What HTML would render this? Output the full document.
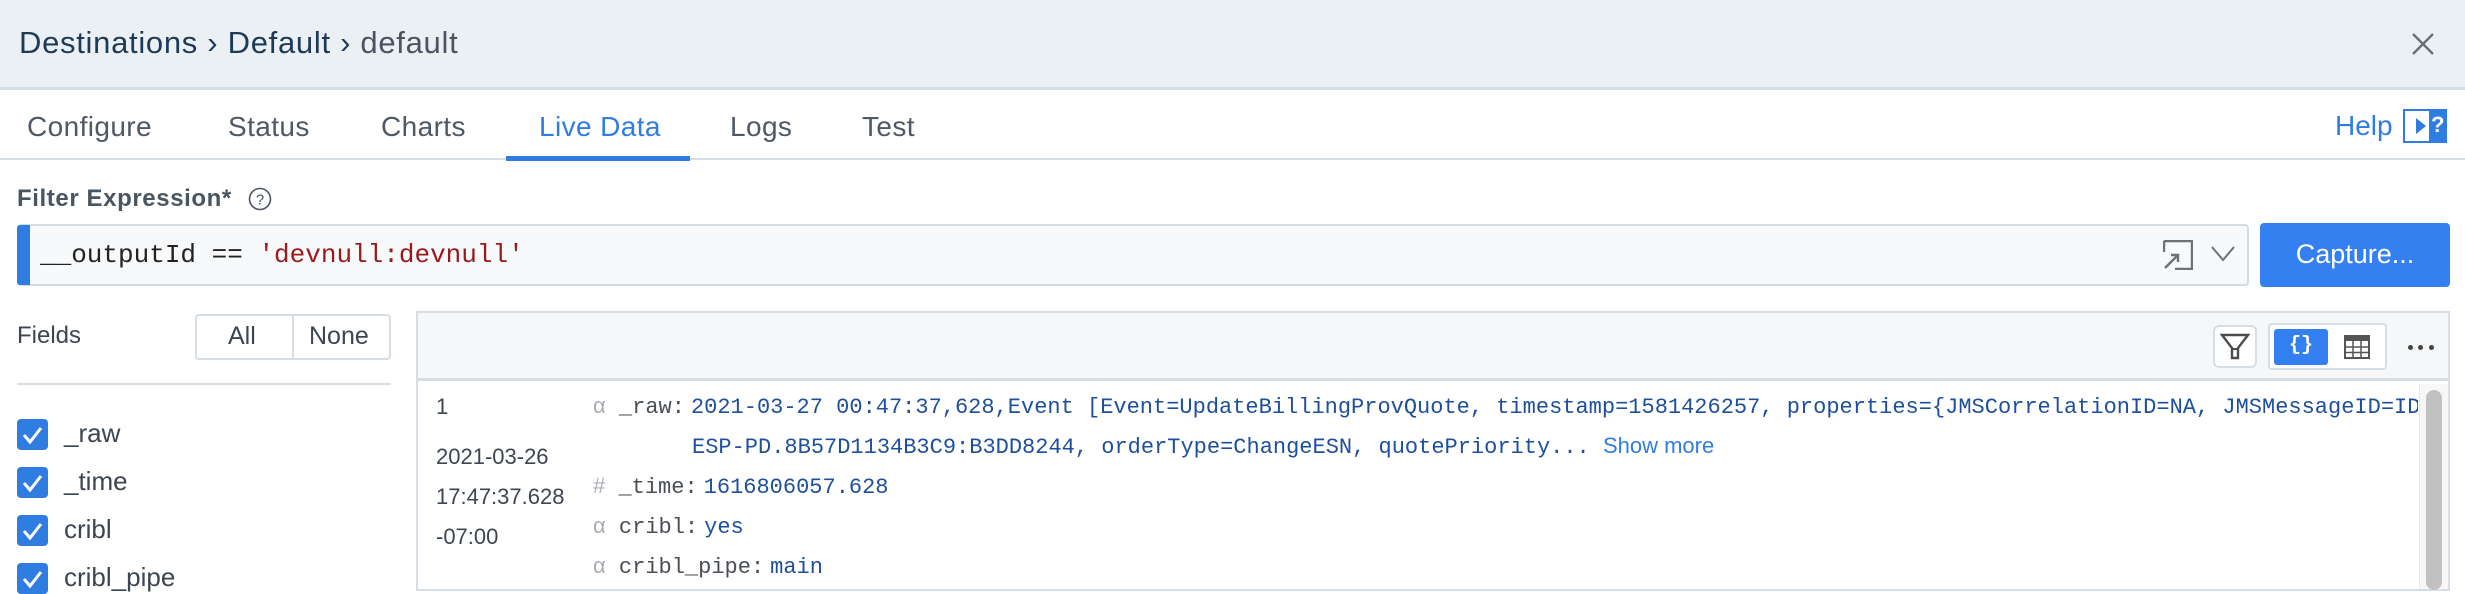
<!DOCTYPE html>
<html><head><meta charset="utf-8"><style>
*{box-sizing:border-box;margin:0;padding:0}
body{width:2465px;height:593px;overflow:hidden;background:#fff;font-family:"Liberation Sans",sans-serif;position:relative;color:#3d4650}
.a{position:absolute;white-space:nowrap}
.mono{font-family:"Liberation Mono",monospace}
.tab{position:absolute;top:111px;font-size:28px;color:#4f5863;letter-spacing:0.4px}
.cb{position:absolute;left:17px;width:31px;height:31px;background:#2f7de1;border-radius:4px}
.cb svg{position:absolute;left:5px;top:6px}
.fl{position:absolute;left:64px;font-size:26px;color:#3d4650}
.k{color:#4a4f55;margin-right:6px}.v{color:#1d4f9c}.t{color:#a9aeb3;font-family:"Liberation Sans",sans-serif}
</style></head><body>
<div class="a" style="left:0;top:0;width:2465px;height:90px;background:#ebf0f5;border-bottom:3px solid #d6dde4"></div>
<div class="a" style="left:19px;top:25px;font-size:31px;letter-spacing:0.7px;color:#1f3a55">Destinations › Default › <span style="color:#4a5561">default</span></div>
<svg class="a" style="left:2412px;top:33px" width="22" height="22" viewBox="0 0 22 22"><path d="M1 1L21 21M21 1L1 21" stroke="#6b6f73" stroke-width="2.4"/></svg>

<div class="tab" style="left:27px">Configure</div>
<div class="tab" style="left:228px">Status</div>
<div class="tab" style="left:381px">Charts</div>
<div class="tab" style="left:539px;color:#2f7de1">Live Data</div>
<div class="tab" style="left:730px">Logs</div>
<div class="tab" style="left:862px">Test</div>
<div class="a" style="left:0;top:158px;width:2465px;height:2px;background:#d6dde4"></div>
<div class="a" style="left:506px;top:156px;width:184px;height:5px;background:#2f7de1"></div>
<div class="a" style="left:2335px;top:110px;font-size:28px;color:#2f7de1">Help</div>
<div class="a" style="left:2403px;top:109px;width:44px;height:34px;border:2px solid #2f7de1;background:#2f7de1">
 <div style="position:absolute;left:0;top:0;width:24px;height:30px;background:#fff"></div>
 <div style="position:absolute;left:11px;top:7px;border-left:10px solid #2f7de1;border-top:8px solid transparent;border-bottom:8px solid transparent"></div>
 <div style="position:absolute;left:26px;top:1px;color:#fff;font-weight:bold;font-size:22px">?</div>
</div>

<div class="a" style="left:17px;top:185px;font-size:24px;font-weight:bold;color:#4a5562;letter-spacing:0.6px">Filter Expression*</div>
<svg class="a" style="left:248px;top:187px" width="24" height="24" viewBox="0 0 24 24"><circle cx="12" cy="12" r="10.5" fill="none" stroke="#4a5562" stroke-width="1.6"/><text x="12" y="17.5" font-size="15" text-anchor="middle" fill="#4a5562" font-family="Liberation Sans">?</text></svg>

<div class="a" style="left:17px;top:224px;width:2232px;height:62px;background:#f8f9fb;border:2px solid #d3dae1;border-radius:4px"></div>
<div class="a" style="left:17px;top:225px;width:13px;height:60px;background:#2f7de1;border-radius:3px 0 0 3px"></div>
<div class="a mono" style="left:40px;top:240px;font-size:26px;color:#222">__outputId == <span style="color:#9a1a1a">'devnull:devnull'</span></div>
<svg class="a" style="left:2163px;top:240px" width="30" height="30" viewBox="0 0 30 30"><path d="M1 1H29V29H12M1 1V12" fill="none" stroke="#6e7175" stroke-width="2.4"/><path d="M2 28L15 15M8 15H15V22" fill="none" stroke="#6e7175" stroke-width="2.4"/></svg>
<svg class="a" style="left:2211px;top:246px" width="24" height="16" viewBox="0 0 24 16"><path d="M1 1L12 14L23 1" fill="none" stroke="#6e7175" stroke-width="2"/></svg>
<div class="a" style="left:2260px;top:223px;width:190px;height:64px;background:#3580f0;border-radius:4px;color:#fff;font-size:27px;text-align:center;line-height:62px">Capture...</div>

<div class="a" style="left:17px;top:322px;font-size:24px;color:#3d4650">Fields</div>
<div class="a" style="left:195px;top:314px;width:196px;height:46px;border:2px solid #d6dde4;border-radius:4px"></div>
<div class="a" style="left:292px;top:315px;width:2px;height:44px;background:#d6dde4"></div>
<div class="a" style="left:228px;top:322px;font-size:25px;color:#3d4650">All</div>
<div class="a" style="left:309px;top:322px;font-size:25px;color:#3d4650">None</div>
<div class="a" style="left:17px;top:383px;width:374px;height:2px;background:#d6dde4"></div>

<div class="cb" style="top:419px"><svg width="21" height="20" viewBox="0 0 21 20"><path d="M2 10L8 17L19 3" fill="none" stroke="#fff" stroke-width="3"/></svg></div>
<div class="fl" style="top:418px">_raw</div>
<div class="cb" style="top:467px"><svg width="21" height="20" viewBox="0 0 21 20"><path d="M2 10L8 17L19 3" fill="none" stroke="#fff" stroke-width="3"/></svg></div>
<div class="fl" style="top:466px">_time</div>
<div class="cb" style="top:515px"><svg width="21" height="20" viewBox="0 0 21 20"><path d="M2 10L8 17L19 3" fill="none" stroke="#fff" stroke-width="3"/></svg></div>
<div class="fl" style="top:514px">cribl</div>
<div class="cb" style="top:563px"><svg width="21" height="20" viewBox="0 0 21 20"><path d="M2 10L8 17L19 3" fill="none" stroke="#fff" stroke-width="3"/></svg></div>
<div class="fl" style="top:562px">cribl_pipe</div>

<div class="a" style="left:416px;top:311px;width:2034px;height:280px;border:2px solid #d6dde4;background:#fff"></div>
<div class="a" style="left:418px;top:313px;width:2030px;height:68px;background:#f5f7f9;border-bottom:3px solid #d6dde4"></div>
<div class="a" style="left:2213px;top:325px;width:44px;height:43px;border:2px solid #d6dde4;border-radius:6px;background:#fff"></div>
<svg class="a" style="left:2220px;top:333px" width="30" height="27" viewBox="0 0 30 27"><path d="M2 2H28L18 15V25H12V15Z" fill="none" stroke="#4a4d50" stroke-width="2.4"/><path d="M12 16H18" stroke="#4a4d50" stroke-width="2"/></svg>
<div class="a" style="left:2268px;top:323px;width:119px;height:47px;border:2px solid #d6dde4;border-radius:4px;background:#fff"></div>
<div class="a" style="left:2274px;top:329px;width:54px;height:36px;background:#3580f0;border-radius:3px;color:#fff;font-size:20px;text-align:center;line-height:34px;font-family:'Liberation Mono',monospace;font-weight:bold">{}</div>
<svg class="a" style="left:2344px;top:335px" width="26" height="24" viewBox="0 0 26 24"><rect x="1" y="1" width="24" height="22" fill="none" stroke="#555" stroke-width="2"/><rect x="1" y="1" width="24" height="5" fill="#555"/><path d="M1 12H25M1 17.5H25M9 6V23M17 6V23" stroke="#555" stroke-width="1.5"/></svg>
<div class="a" style="left:2408px;top:345px;width:5px;height:5px;border-radius:50%;background:#444;box-shadow:10px 0 #444,21px 0 #444"></div>

<div class="a" style="left:436px;top:394px;font-size:22px;color:#3d4650">1</div>
<div class="a" style="left:436px;top:444px;font-size:22px;color:#3d4650">2021-03-26</div>
<div class="a" style="left:436px;top:484px;font-size:22px;color:#3d4650">17:47:37.628</div>
<div class="a" style="left:436px;top:524px;font-size:22px;color:#3d4650">-07:00</div>

<div class="a mono" style="left:593px;top:393px;font-size:22px;width:1825px;overflow:hidden"><span class="t">α</span> <span class="k">_raw:</span><span class="v">2021-03-27 00:47:37,628,Event [Event=UpdateBillingProvQuote, timestamp=1581426257, properties={JMSCorrelationID=NA, JMSMessageID=ID:ESP-PD</span></div>
<div class="a mono" style="left:692px;top:433px;font-size:22px"><span class="v">ESP-PD.8B57D1134B3C9:B3DD8244, orderType=ChangeESN, quotePriority...</span> <span style="font-family:'Liberation Sans',sans-serif;color:#2f7de1">Show more</span></div>
<div class="a mono" style="left:593px;top:473px;font-size:22px"><span class="t">#</span> <span class="k">_time:</span><span class="v">1616806057.628</span></div>
<div class="a mono" style="left:593px;top:513px;font-size:22px"><span class="t">α</span> <span class="k">cribl:</span><span class="v">yes</span></div>
<div class="a mono" style="left:593px;top:553px;font-size:22px"><span class="t">α</span> <span class="k">cribl_pipe:</span><span class="v">main</span></div>

<div class="a" style="left:2419px;top:384px;width:29px;height:205px;background:#f7f7f7;border-left:1px solid #e8e8e8"></div>
<div class="a" style="left:2426px;top:390px;width:16px;height:200px;background:#c1c1c1;border-radius:8px"></div>
</body></html>
